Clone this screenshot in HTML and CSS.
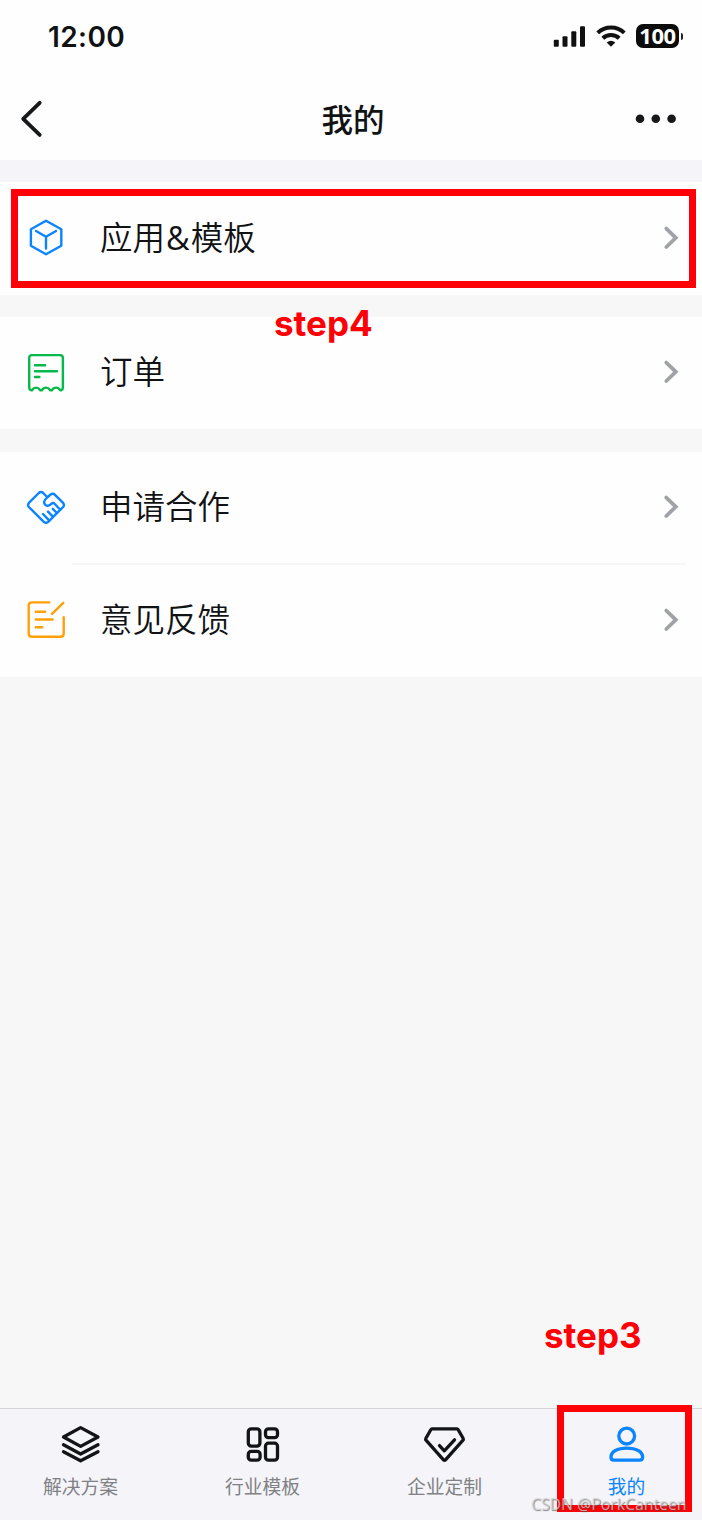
FILE: index.html
```html
<!DOCTYPE html>
<html lang="zh-CN">
  <head>
    <meta charset="UTF-8" />
    <meta name="viewport" content="width=device-width, initial-scale=1.0" />
    <title>我的</title>
    <link rel="stylesheet" href="styles.css">
  </head>
  <body>
    <div class="phone">
      <header>
        <div class="status-bar">
          <span class="clock">12:00</span>
          <div class="status-icons">
            <svg class="signal" width="33" height="24" viewBox="0 0 33 24" fill="#111">
              <rect x="0.8" y="14.8" width="5" height="7" rx="1" />
              <rect x="9.5" y="11.3" width="5" height="10.5" rx="1" />
              <rect x="18.3" y="6.3" width="5" height="15.5" rx="1" />
              <rect x="27" y="1.3" width="5" height="20.5" rx="1" />
            </svg>
            <svg class="wifi" width="30" height="24" viewBox="0 0 30 24" fill="none" stroke="#111" stroke-width="4">
              <path d="M1.7 7.9 A19.3 19.3 0 0 1 28.3 7.9" />
              <path d="M6.8 13.2 A12 12 0 0 1 23.2 13.2" />
              <path d="M15 21.8 L10.7 17.6 Q15 13.9 19.3 17.6 Z" fill="#111" stroke="none" />
            </svg>
            <div class="battery">100</div>
          </div>
        </div>
        <nav class="nav-bar">
          <svg width="26" height="40" viewBox="0 0 26 40" fill="none" stroke="#17181a" stroke-width="3.8" stroke-linecap="round" stroke-linejoin="round">
            <path d="M21.7 3.8 L5.2 19.9 L21.7 35.9" />
          </svg>
          <h1>我的</h1>
          <svg width="42" height="12" viewBox="0 0 42 12" fill="#17181a">
            <circle cx="5" cy="5.7" r="4.3" />
            <circle cx="20.8" cy="5.7" r="4.3" />
            <circle cx="36.6" cy="5.7" r="4.3" />
          </svg>
        </nav>
      </header>

      <main>
        <section class="group">
          <a class="row tall" href="#">
            <svg class="icon blue" viewBox="0 0 40 40">
              <path d="M20 2.8 L35.3 11.2 V27.7 L20 36.2 L4.9 27.7 V11.2 Z" />
              <path d="M10 13 L20 18.8 L30 13 M20 18.8 V30.5" />
            </svg>
            <span class="label">应用<span class="amp">&amp;</span>模板</span>
            <svg class="chevron" viewBox="0 0 18 26"><path d="M5.3 3.6 L14.8 12.8 L5.3 22" /></svg>
          </a>
        </section>

        <section class="group">
          <a class="row" href="#">
            <svg class="icon green" viewBox="0 0 40 40">
              <path d="M6 37.4 Q3.2 37.4 3.2 34 V5 Q3.2 2.1 6 2.1 H34 Q36.9 2.1 36.9 5 V34 Q36.9 37.4 34.4 37.4 Q32.5 34.6 30 34.6 Q27.5 34.6 25.8 37.3 H24.3 Q22.5 34.6 20 34.6 Q17.5 34.6 15.8 37.3 H14.3 Q12.5 34.6 10 34.6 Q7.8 34.6 6 37.4 Z" />
              <path d="M9 12.3 H19.2 M9 18.3 H31 M9 24 H13.4" />
            </svg>
            <span class="label">订单</span>
            <svg class="chevron" viewBox="0 0 18 26"><path d="M5.3 3.6 L14.8 12.8 L5.3 22" /></svg>
          </a>
        </section>

        <section class="group">
          <a class="row" href="#">
            <svg class="icon blue" viewBox="0 0 40 40">
              <path d="M20.6 8.5 L17.2 5 Q15 3 12.8 5 L2.9 14.9 Q1.2 17 2.9 19 L17.8 33.8 Q20 35.8 22.2 33.8 L37.1 19 Q38.8 17 37.1 14.9 L29 6.8 Q26.8 5 24.6 6.5 L20.6 10 Q16.4 14 19.3 16.8 Q21.8 19 24.8 16.4 Q27 14 28.6 15.8 L33.5 21" />
              <path d="M26.8 20.8 L30.4 24.5 M22 23.6 L26.6 28.4 M17 26 L22.6 31.8" />
            </svg>
            <span class="label">申请合作</span>
            <svg class="chevron" viewBox="0 0 18 26"><path d="M5.3 3.6 L14.8 12.8 L5.3 22" /></svg>
          </a>
          <a class="row tall divided" href="#">
            <svg class="icon orange" viewBox="0 0 40 40">
              <path d="M23.3 2.4 H6 Q2.7 2.4 2.7 5.6 V33.4 Q2.7 36.7 6 36.7 H34.4 Q37.7 36.7 37.7 33.4 V17.3 M37.3 2.8 L26 13.8" />
              <path d="M9.8 11.8 H19.2 M9.8 19.5 H26.6 M9.8 27.2 H16.2" />
            </svg>
            <span class="label">意见反馈</span>
            <svg class="chevron" viewBox="0 0 18 26"><path d="M5.3 3.6 L14.8 12.8 L5.3 22" /></svg>
          </a>
        </section>
      </main>

      <footer class="tab-bar">
        <a class="tab" href="#">
          <svg viewBox="0 0 44 44">
            <path d="M21.6 5.6 L39 15 L21.6 24.4 L4.5 15 Z" />
            <path d="M4.5 22.8 L21.6 32 L39 22.8" />
            <path d="M4.5 29.8 L21.6 38.8 L39 29.8" />
          </svg>
          <span>解决方案</span>
        </a>
        <a class="tab" href="#">
          <svg viewBox="0 0 44 44">
            <rect x="7.3" y="6.9" width="11.6" height="17.2" rx="3" />
            <rect x="24.5" y="6.9" width="12" height="8.8" rx="3" />
            <rect x="7.3" y="29.4" width="11.8" height="8.8" rx="3" />
            <rect x="24.5" y="21.2" width="12" height="17" rx="3" />
          </svg>
          <span>行业模板</span>
        </a>
        <a class="tab" href="#">
          <svg viewBox="0 0 44 44">
            <path d="M9 6.9 H34 Q34.7 6.9 35.2 7.8 L40.1 16.3 Q40.7 17.4 39.8 18.4 L22.5 37.8 Q21.5 38.9 20.5 37.8 L3.2 18.4 Q2.3 17.4 2.9 16.3 L7.8 7.8 Q8.3 6.9 9 6.9 Z" />
            <path d="M16.5 23.6 L21.3 28.8 L31.5 17.8" />
          </svg>
          <span>企业定制</span>
        </a>
        <a class="tab active" href="#">
          <svg viewBox="0 0 44 44">
            <circle cx="21.7" cy="14.1" r="7.9" />
            <path d="M21.7 26.2 C31 26.2 37.6 29.5 37.6 35.2 Q37.6 38.2 34.7 38.2 H8.9 Q6 38.2 6 35.2 C6 29.5 12.5 26.2 21.7 26.2 Z" />
          </svg>
          <span>我的</span>
        </a>
      </footer>

      <!-- Step annotations -->
      <div class="highlight highlight-apps"></div>
      <div class="highlight highlight-mine"></div>
      <div class="step step-four">step4</div>
      <div class="step step-three">step3</div>
      <div class="watermark">CSDN @PorkCanteen</div>
    </div>
  </body>
</html>
```
FILE: styles.css
```css
* {
  margin: 0;
  padding: 0;
  box-sizing: border-box;
}

body {
  background-color: #f7f7f7;
  color: #111214;
  font-family: Inter, "Noto Sans CJK SC", sans-serif;
}

a {
  color: inherit;
  text-decoration: none;
}

.phone {
  position: relative;
  display: flex;
  flex-direction: column;
  width: 702px;
  height: 1520px;
  overflow: hidden;
}

/* Header */
header {
  height: 160px;
  background-color: #fefefe;
}

.status-bar {
  display: flex;
  justify-content: space-between;
  align-items: center;
  height: 73px;
  padding: 0 18px 0 48px;
}

.clock {
  font-size: 28px;
  font-weight: 600;
  line-height: 34px;
  letter-spacing: 0.4px;
}

.status-icons {
  display: flex;
  align-items: center;
}

.wifi {
  margin: 0 10px 0 10px;
}

.battery {
  position: relative;
  width: 43px;
  height: 24px;
  margin: 0 5px 1px 0;
  border-radius: 7px;
  background-color: #0c0c0c;
  color: #fff;
  font: 700 22px/23px "Noto Sans", sans-serif;
  letter-spacing: -0.5px;
  text-align: center;
}

.battery::after {
  content: "";
  position: absolute;
  top: 9px;
  right: -4px;
  width: 2px;
  height: 7px;
  border-radius: 0 3px 3px 0;
  background-color: #222;
}

.nav-bar {
  display: flex;
  justify-content: space-between;
  align-items: center;
  height: 92px;
  padding: 0 25px 0 18px;
}

.nav-bar h1 {
  padding: 0 0 3px 27px;
  font-family: "Noto Sans CJK SC", sans-serif;
  font-size: 31.5px;
  font-weight: 500;
}

/* List */
main {
  flex: 1;
  padding-top: 22px;
  background: linear-gradient(#f4f4f9 22px, #f7f7f7 22px);
}

.group {
  margin-bottom: 22px;
  background-color: #fefefe;
}

.group:nth-child(2) {
  margin-bottom: 23px;
}

.row {
  position: relative;
  display: flex;
  align-items: center;
  height: 112px;
  padding: 0 23px 1px 26px;
}

.row.tall {
  height: 113px;
}

.row.divided::before {
  content: "";
  position: absolute;
  top: -1px;
  left: 72px;
  right: 16px;
  height: 2px;
  background-color: #f7f7f7;
}

.icon {
  width: 40px;
  height: 40px;
  fill: none;
  stroke: currentColor;
  stroke-width: 2.4;
  stroke-linecap: round;
  stroke-linejoin: round;
}

.blue {
  color: #0a84ff;
}

.green {
  color: #07b84b;
}

.orange {
  color: #ff9f0a;
}

.label {
  flex: 1;
  margin-left: 34px;
  padding-top: 1px;
  font-family: Inter, "Noto Sans CJK SC", sans-serif;
  font-size: 32.5px;
  font-weight: 350;
  line-height: 48px;
}

.amp {
  margin: 0 1px 0 1px;
  font-family: "Open Sans", sans-serif;
  font-weight: 400;
  line-height: 1;
}

.chevron {
  width: 18px;
  height: 26px;
  margin-bottom: 1px;
  fill: none;
  stroke: #9fa3a8;
  stroke-width: 3.8;
  stroke-linecap: round;
}

/* Tab bar */
.tab-bar {
  display: flex;
  justify-content: space-between;
  height: 112px;
  padding: 13px 38px 0 43px;
  border-top: 1px solid #d4d4d6;
  background-color: #f4f4f9;
}

.tab {
  display: flex;
  flex-direction: column;
  align-items: center;
  width: 75px;
  color: #808184;
  font: 400 18.75px/28px "Noto Sans CJK SC", sans-serif;
  white-space: nowrap;
}

.tab svg {
  width: 44px;
  height: 44px;
  margin-bottom: 6px;
  fill: none;
  stroke: #131416;
  stroke-width: 3.3;
  stroke-linecap: round;
  stroke-linejoin: round;
}

.tab.active {
  color: #0a84ff;
}

.tab.active svg {
  stroke: #0a84ff;
}

/* Annotations */
.highlight {
  position: absolute;
  border: 7px solid #ff0006;
}

.highlight-apps {
  top: 189px;
  left: 11px;
  width: 685px;
  height: 99px;
}

.highlight-mine {
  top: 1405px;
  left: 557px;
  width: 135px;
  height: 107px;
}

.step {
  position: absolute;
  color: #ff0006;
  font-size: 35px;
  font-weight: 700;
  line-height: 42px;
}

.step-four {
  top: 302px;
  left: 274px;
}

.step-three {
  top: 1314px;
  left: 544px;
}

.watermark {
  position: absolute;
  top: 1494px;
  left: 531px;
  color: rgba(215, 215, 215, 0.75);
  font: 15.8px/20px "Open Sans", sans-serif;
  text-shadow: 1px 1px 1px rgba(70, 70, 70, 0.65);
  white-space: nowrap;
}
```
